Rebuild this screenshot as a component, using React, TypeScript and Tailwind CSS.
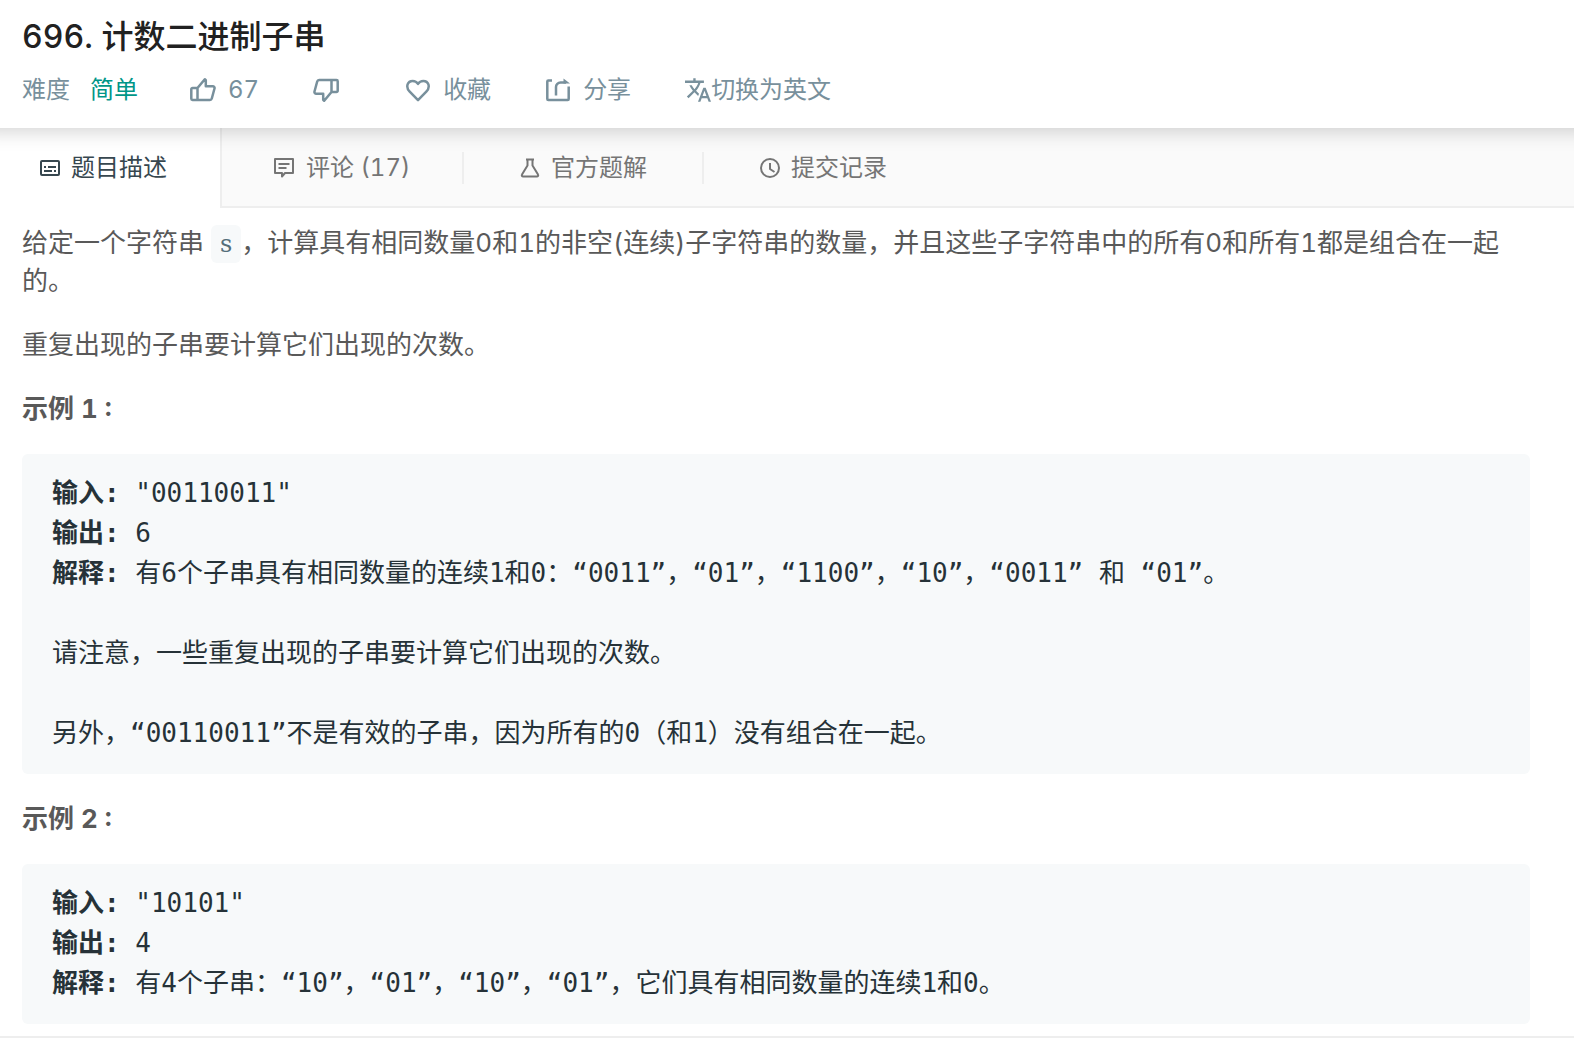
import type { ReactNode } from "react";

const iconProps = {
  fill: "none",
  stroke: "currentColor",
  strokeWidth: 2,
  strokeLinejoin: "round" as const,
  "aria-hidden": true,
};

function ThumbIcon({ className = "" }: { className?: string }) {
  return (
    <svg
      {...iconProps}
      strokeWidth={2.5}
      width="26"
      height="26"
      viewBox="0 0 26 26"
      className={className}
    >
      <path d="M7.500 11V23H2.500a1.200 1.200 0 0 1-1.200-1.200V12.200A1.200 1.200 0 0 1 2.500 11H7.500L14.800 2.200 15.800 3.200V9.200H22.800a1.800 1.800 0 0 1 1.700 2.300L21.800 21.500a2 2 0 0 1-1.900 1.500H7.500" />
    </svg>
  );
}

function HeartIcon() {
  return (
    <svg {...iconProps} strokeWidth={2.5} width="26" height="26" viewBox="0 0 26 26">
      <path d="M13 23.200 4.700 14.600C.2 9.900 2.600 3.900 7.700 3.900c2.200 0 4.100 1.100 5.300 3 1.200-1.900 3.100-3 5.300-3 5.100 0 7.500 6 3 10.700Z" />
    </svg>
  );
}

function ShareIcon() {
  return (
    <svg {...iconProps} strokeWidth={2.5} width="26" height="26" viewBox="0 0 26 26">
      <path d="M7 3.500H3.300a1 1 0 0 0-1 1V22a1 1 0 0 0 1 1H22.700a1 1 0 0 0 1-1V9.500" />
      <path d="M11 18.500V10a4.500 4.500 0 0 1 4.500-4.500H21" />
      <path d="M18.500 1.500 25 6.600H18.500Z" fill="currentColor" stroke="none" />
    </svg>
  );
}

function TranslateIcon() {
  return (
    <svg width="26" height="26" viewBox="1 1 22 22" fill="currentColor" aria-hidden="true">
      <path d="M12.870 15.070l-2.540-2.510.03-.03c1.740-1.940 2.980-4.170 3.710-6.530H17V4h-7V2H8v2H1v1.990h11.170C11.500 7.920 10.440 9.750 9 11.350 8.070 10.320 7.300 9.190 6.690 8h-2c.73 1.630 1.730 3.170 2.980 4.560l-5.090 5.020L4 19l5-5 3.110 3.110.76-2.040zM18.500 10h-2L12 22h2l1.120-3h4.750L21 22h2l-4.500-12zm-2.620 7l1.620-4.330L19.120 17h-3.240z" />
    </svg>
  );
}

function DescriptionIcon() {
  return (
    <svg {...iconProps} width="20" height="20" viewBox="0 0 20 20">
      <rect x="1" y="3" width="18" height="14" rx="1" />
      <path d="M4 9h2M8 9h8M4 13h8M14 13h2" />
    </svg>
  );
}

function CommentIcon() {
  return (
    <svg {...iconProps} width="20" height="20" viewBox="0 0 20 20">
      <path d="M1 1H19V15H11L8 18.500V15H1Z" />
      <path d="M4.500 6h11M4.500 10h8" />
    </svg>
  );
}

function FlaskIcon() {
  return (
    <svg {...iconProps} width="20" height="20" viewBox="0 0 20 20">
      <path d="M6 1.500h8M7.500 2v5.500L2 16.500a1.300 1.300 0 0 0 1.200 2H16.800a1.300 1.300 0 0 0 1.200-2L12.500 7.500V2" />
    </svg>
  );
}

function ClockIcon() {
  return (
    <svg {...iconProps} width="20" height="20" viewBox="0 0 20 20">
      <circle cx="10" cy="10" r="9" />
      <path d="M10 5v6l4.500 3" />
    </svg>
  );
}

const tabs = [
  { label: "评论 (17)", icon: <CommentIcon />, className: "w-[242px] pl-[52px] gap-3" },
  { label: "官方题解", icon: <FlaskIcon />, className: "w-[240px] pl-14 gap-[11px]" },
  { label: "提交记录", icon: <ClockIcon />, className: "pl-14 gap-[11px]" },
];

function Example({ title, children }: { title: string; children: ReactNode }) {
  return (
    <>
      <p className="font-bold">{title}</p>
      <pre className="rounded-md bg-[#f7f9fa] px-[30px] pt-[19px] pb-[21px] font-['DejaVu_Sans_Mono','Noto_Sans_CJK_SC',monospace] leading-10 whitespace-pre-wrap text-[#263238]">
        {children}
      </pre>
    </>
  );
}

export default function App() {
  return (
    <div className="overflow-x-clip bg-white font-[Inter,'Noto_Sans_CJK_SC',sans-serif] text-2xl tabular-nums">
      {/* Encabezado */}
      <header className="relative h-32 bg-white px-[22px] pt-4 shadow-[0_-18px_20px_20px_rgba(0,0,0,0.2)]">
        <h1 className="text-[32px] leading-[42px] font-medium text-[#212121]">
          696. 计数二进制子串
        </h1>
        <div className="mt-3 flex h-10 items-center text-[#78909c]">
          <span>难度</span>
          <span className="ml-5 text-[#009688]">简单</span>
          <button className="ml-[52px] flex items-center gap-3">
            <ThumbIcon />
            67
          </button>
          <button className="ml-[54px]" aria-label="踩">
            <ThumbIcon className="rotate-180" />
          </button>
          <button className="ml-[66px] flex items-center gap-3">
            <HeartIcon />
            收藏
          </button>
          <button className="ml-[54px] flex items-center gap-3">
            <ShareIcon />
            分享
          </button>
          <button className="ml-[54px] flex items-center">
            <TranslateIcon />
            切换为英文
          </button>
        </div>
      </header>

      {/* Pestañas */}
      <nav className="flex h-20 bg-[#fafafa] text-[#757575]">
        <button className="flex w-[220px] items-center gap-[11px] bg-white pl-10 text-[#37474f]">
          <DescriptionIcon />
          题目描述
        </button>
        <div className="flex flex-1 items-center border-b-2 border-l-2 border-[#eee] pt-px">
          {tabs.map((tab, i) => (
            <button
              key={tab.label}
              className={`flex h-8 items-center border-[#eee] ${i < 2 ? "border-r-2" : ""} ${tab.className}`}
            >
              {tab.icon}
              {tab.label}
            </button>
          ))}
        </div>
      </nav>

      {/* Descripción */}
      <main className="flex flex-col gap-[26px] border-b-2 border-[#eee] pt-4 pr-11 pb-3 pl-[22px] text-[26px] leading-[38px] text-[#595959]">
        <p>
          给定一个字符串{" "}
          <code className="rounded-md bg-[#f7f9fa] px-[9px] py-[5px] font-['DejaVu_Serif',serif] text-2xl leading-none text-[#546e7a]">
            s
          </code>
          ，计算具有相同数量0和1的非空(连续)子字符串的数量，并且这些子字符串中的所有0和所有1都是组合在一起的。
        </p>
        <p>重复出现的子串要计算它们出现的次数。</p>

        <Example title="示例 1 :">
          <b>输入:</b> "00110011"{"\n"}
          <b>输出:</b> 6{"\n"}
          <b>解释:</b> 有6个子串具有相同数量的连续1和0：“0011”，“01”，“1100”，“10”，“0011” 和 “01”。{"\n\n"}
          请注意，一些重复出现的子串要计算它们出现的次数。{"\n\n"}
          另外，“00110011”不是有效的子串，因为所有的0（和1）没有组合在一起。
        </Example>

        <Example title="示例 2 :">
          <b>输入:</b> "10101"{"\n"}
          <b>输出:</b> 4{"\n"}
          <b>解释:</b> 有4个子串：“10”，“01”，“10”，“01”，它们具有相同数量的连续1和0。
        </Example>
      </main>
    </div>
  );
}
